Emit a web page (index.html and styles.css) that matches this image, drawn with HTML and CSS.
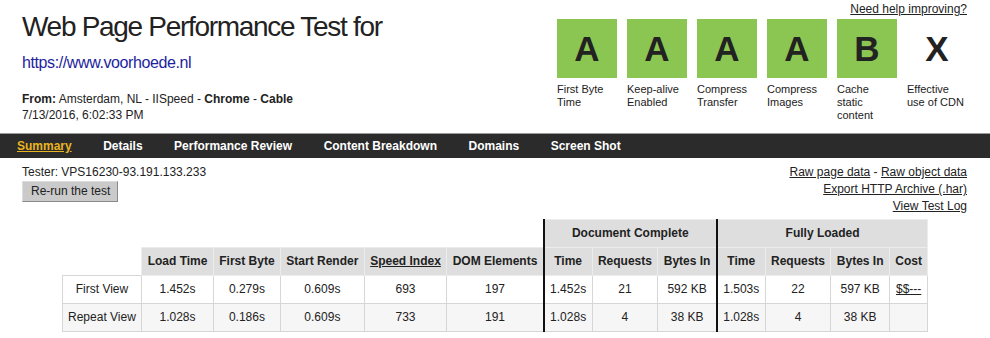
FILE: index.html
```html
<!DOCTYPE html>
<html lang="en">
<head>
    <meta charset="UTF-8">
    <title>WebPagetest Test Result</title>
    <link rel="stylesheet" href="styles.css">
</head>
<body>
    <div class="header">
        <div class="test-info">
            <h1>Web Page Performance Test for</h1>
            <a class="test-url" href="#">https://www.voorhoede.nl</a>
            <div class="location">
                <b>From:</b> Amsterdam, NL - IISpeed - <b>Chrome</b> - <b>Cable</b><br>
                7/13/2016, 6:02:33 PM
            </div>
        </div>
        <div class="grades-box">
            <a class="help-link" href="#">Need help improving?</a>
            <ul class="grades">
                <li><span class="grade grade-a">A</span><span class="grade-label">First Byte Time</span></li>
                <li><span class="grade grade-a">A</span><span class="grade-label">Keep-alive Enabled</span></li>
                <li><span class="grade grade-a">A</span><span class="grade-label">Compress Transfer</span></li>
                <li><span class="grade grade-a">A</span><span class="grade-label">Compress Images</span></li>
                <li><span class="grade grade-b">B</span><span class="grade-label">Cache static content</span></li>
                <li><span class="grade grade-x">X</span><span class="grade-label">Effective use of CDN</span></li>
            </ul>
        </div>
    </div>

    <ul class="nav">
        <li><a class="current" href="#">Summary</a></li>
        <li><a href="#">Details</a></li>
        <li><a href="#">Performance Review</a></li>
        <li><a href="#">Content Breakdown</a></li>
        <li><a href="#">Domains</a></li>
        <li><a href="#">Screen Shot</a></li>
    </ul>

    <div class="result-bar">
        <div class="tester">
            <div>Tester: VPS16230-93.191.133.233</div>
            <button class="rerun">Re-run the test</button>
        </div>
        <div class="downloads">
            <a href="#">Raw page data</a> - <a href="#">Raw object data</a><br>
            <a href="#">Export HTTP Archive (.har)</a><br>
            <a href="#">View Test Log</a>
        </div>
    </div>

    <table class="results">
        <thead>
            <tr>
                <th class="blank" colspan="6"></th>
                <th class="group" colspan="3">Document Complete</th>
                <th class="group" colspan="4">Fully Loaded</th>
            </tr>
            <tr>
                <th class="blank"></th>
                <th>Load Time</th>
                <th>First Byte</th>
                <th>Start Render</th>
                <th><a href="#">Speed Index</a></th>
                <th>DOM Elements</th>
                <th class="group-start">Time</th>
                <th>Requests</th>
                <th>Bytes In</th>
                <th class="group-start">Time</th>
                <th>Requests</th>
                <th>Bytes In</th>
                <th>Cost</th>
            </tr>
        </thead>
        <tbody>
            <tr>
                <td>First View</td>
                <td>1.452s</td>
                <td>0.279s</td>
                <td>0.609s</td>
                <td>693</td>
                <td>197</td>
                <td class="group-start">1.452s</td>
                <td>21</td>
                <td>592 KB</td>
                <td class="group-start">1.503s</td>
                <td>22</td>
                <td>597 KB</td>
                <td><a href="#">$$---</a></td>
            </tr>
            <tr class="repeat">
                <td>Repeat View</td>
                <td>1.028s</td>
                <td>0.186s</td>
                <td>0.609s</td>
                <td>733</td>
                <td>191</td>
                <td class="group-start">1.028s</td>
                <td>4</td>
                <td>38 KB</td>
                <td class="group-start">1.028s</td>
                <td>4</td>
                <td>38 KB</td>
                <td></td>
            </tr>
        </tbody>
    </table>
</body>
</html>
```

FILE: styles.css
```css
body {
    font-family: 'Liberation Sans', Arial, sans-serif;
    font-size: 12px;
    color: #222;
    background-color: #fff;
    margin: 0;
}
a {
    color: #222;
}
.header {
    display: flex;
    justify-content: space-between;
    height: 133px;
    padding: 0 23px 0 22px;
    box-sizing: border-box;
}
h1 {
    font-size: 28px;
    line-height: 32px;
    font-weight: normal;
    letter-spacing: -1.3px;
    margin: 11px 0 0;
}
.test-url {
    display: block;
    margin-top: 11px;
    font-size: 16px;
    line-height: 18px;
    letter-spacing: -0.4px;
    color: #1e1ea0;
    text-decoration: none;
}
.location {
    margin-top: 19px;
    line-height: 16px;
}
.grades-box {
    display: flex;
    flex-direction: column;
    align-items: flex-end;
    padding-top: 2px;
}
.help-link {
    line-height: 14px;
}
.grades {
    display: flex;
    gap: 10px;
    list-style: none;
    margin: 3px 0 0;
    padding: 0;
}
.grades li {
    width: 60px;
}
.grade {
    display: flex;
    align-items: center;
    justify-content: center;
    height: 59px;
    font-size: 35px;
    font-weight: bold;
    color: #222;
}
.grade-a, .grade-b {
    background-color: #8cc652;
}
.grade-label {
    display: block;
    margin-top: 5px;
    font-size: 11px;
    line-height: 13px;
}
.nav {
    display: flex;
    gap: 31.5px;
    list-style: none;
    margin: 0;
    padding: 0 0 0 17px;
    height: 25px;
    background-color: #2b2b2b;
    border-top: 1px solid #9a9a9a;
    box-sizing: border-box;
}
.nav a {
    display: block;
    line-height: 24px;
    color: #fff;
    font-weight: bold;
    text-decoration: none;
}
.nav a.current {
    color: #eab41f;
    text-decoration: underline;
}
.result-bar {
    display: flex;
    justify-content: space-between;
    padding: 6px 23px 0 22px;
    line-height: 17px;
}
.rerun {
    display: block;
    font-family: inherit;
    font-size: 12px;
    line-height: 15px;
    color: #222;
    padding: 2px 7px 2px 8px;
    background-color: #cacaca;
    border: 1px solid;
    border-color: #ddd #8a8a8a #8a8a8a #ddd;
}
.downloads {
    text-align: right;
}
.results {
    border-collapse: collapse;
    margin: 4px auto 0;
}
.results th, .results td {
    padding: 6px 5.4px;
    line-height: 15px;
    text-align: center;
    white-space: nowrap;
}
.results th {
    background-color: #dedede;
    border: 1px solid #ececec;
}
.results td {
    border: 1px solid #d6d6d6;
}
.results th.blank {
    background: none;
    border: none;
}
.results .group, .results .group-start {
    border-left: 2px solid #111;
}
.results .repeat td {
    background-color: #f6f6f6;
}
```
